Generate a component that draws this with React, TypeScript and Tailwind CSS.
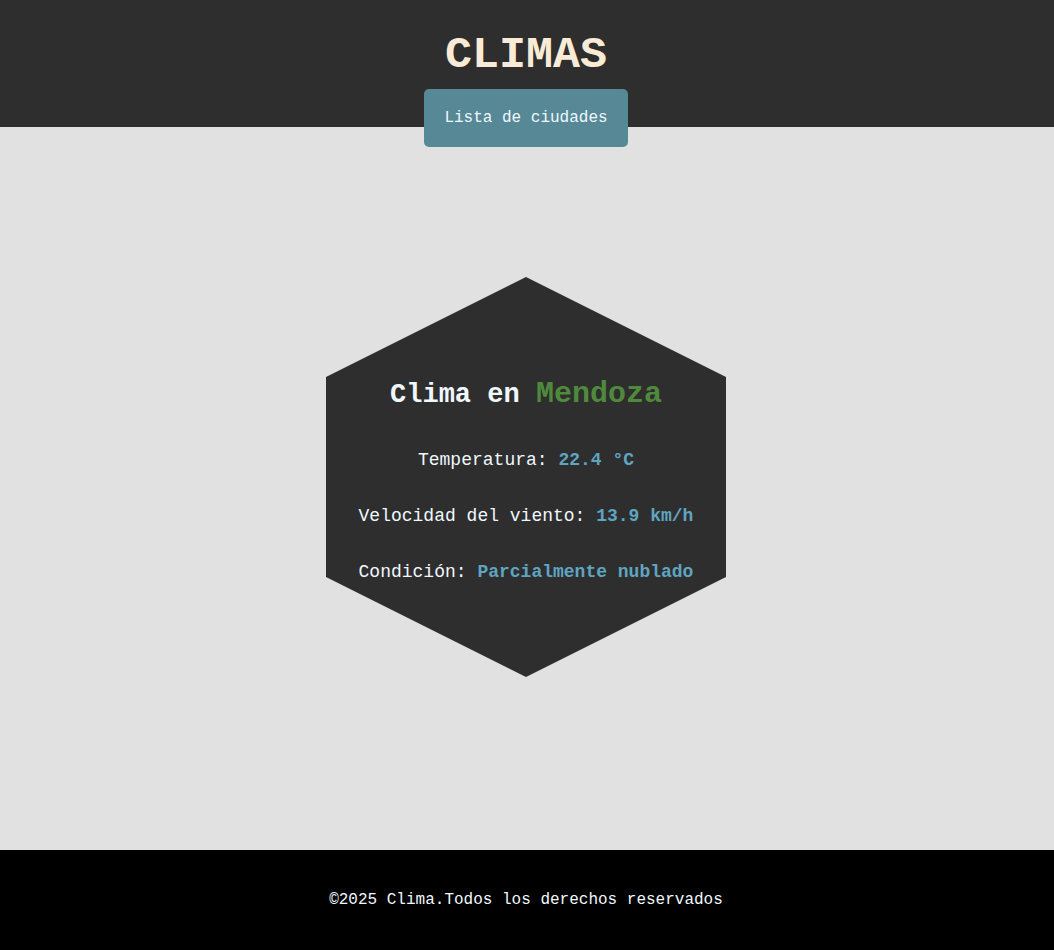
const mono = "font-['Liberation_Mono',monospace]"

export default function App() {
  return (
    <div className={`${mono} min-h-screen flex flex-col bg-[#e1e1e1] pr-[2px]`}>
      <header className="bg-[#2e2e2e] h-[127px] flex flex-col items-center pt-[30px] -mr-[2px] pr-[2px]">
        <h1 className="text-[45px] leading-[51px] font-bold text-[#faebd7] shrink-0">CLIMAS</h1>
        <button className="relative z-10 shrink-0 mt-[8px] h-[58px] w-[204px] rounded-[5px] bg-[#568896] text-[16px] text-[#f0f8ff]">
          Lista de ciudades
        </button>
      </header>

      <main className="h-[723px] flex items-center justify-center pb-[23px]">
        <div className="w-[400px] h-[400px] bg-[#2e2e2e] [clip-path:polygon(50%_0,100%_25%,100%_75%,50%_100%,0_75%,0_25%)] flex flex-col items-center justify-center pt-[6px] text-[#f0f8ff]">
          <h2 className="text-[27px] leading-[32px] font-bold mb-[39px]">
            Clima en <span className="text-[30px] text-[#4f8a3c]">Mendoza</span>
          </h2>
          <div className="flex flex-col items-center gap-[35px] text-[18px] leading-[21px]">
            <p>
              Temperatura: <span className="font-bold text-[#5fa5c1]">22.4 °C</span>
            </p>
            <p>
              Velocidad del viento: <span className="font-bold text-[#5fa5c1]">13.9 km/h</span>
            </p>
            <p>
              Condición: <span className="font-bold text-[#5fa5c1]">Parcialmente nublado</span>
            </p>
          </div>
        </div>
      </main>

      <footer className="bg-black h-[100px] flex items-center justify-center -mr-[2px] pr-[2px]">
        <p className="text-[16px] text-[#f0f8ff]">©2025 Clima.Todos los derechos reservados</p>
      </footer>
    </div>
  )
}
